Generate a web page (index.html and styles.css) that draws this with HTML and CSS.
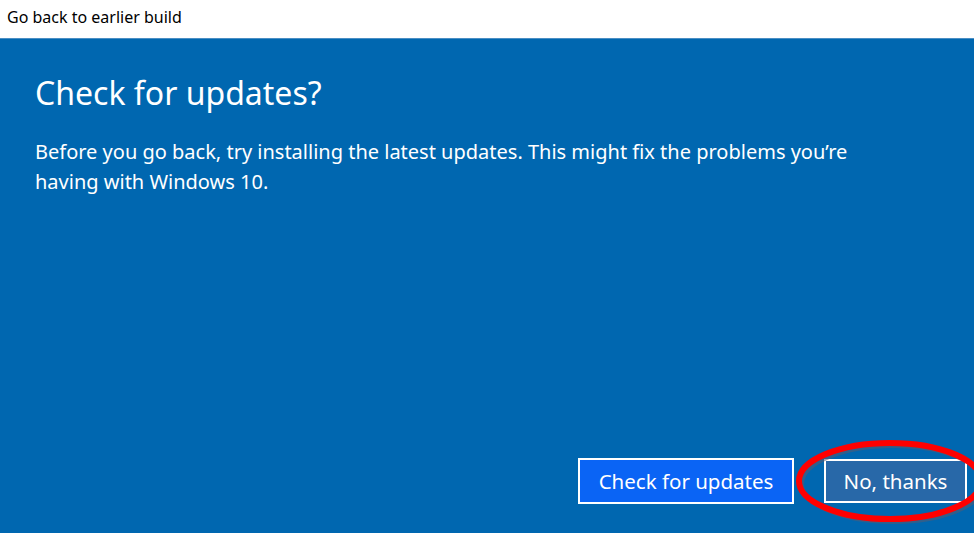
FILE: index.html
```html
<!DOCTYPE html>
<html>
<head>
<meta charset="utf-8">
<link rel="stylesheet" href="styles.css">
</head>
<body>
<div class="titlebar">Go back to earlier build</div>
<div class="panel">
  <h1 class="heading">Check for updates?</h1>
  <p class="body-text">Before you go back, try installing the latest updates. This might fix the problems you’re having with Windows 10.</p>
  <div class="actions">
    <button class="btn btn-primary">Check for updates</button>
    <button class="btn btn-secondary">No, thanks</button>
  </div>
  <svg class="circle" width="200" height="92" viewBox="0 0 200 92">
    <ellipse cx="95" cy="44" rx="91" ry="38" fill="none" stroke="rgba(90,90,110,0.55)" stroke-width="4" transform="translate(3,3)"/>
    <ellipse cx="95" cy="44" rx="91" ry="38" fill="none" stroke="#ff0000" stroke-width="6"/>
  </svg>
</div>
</body>
</html>
```
FILE: styles.css
```css
html, body {
  margin: 0;
  padding: 0;
  width: 974px;
  height: 533px;
  overflow: hidden;
  font-family: "Noto Sans", "Open Sans", sans-serif;
}
.titlebar {
  height: 39px;
  box-sizing: border-box;
  padding: 6px 0 0 7px;
  font-size: 16px;
  color: #000;
  background: #fff;
  border-bottom: 1px solid #4a8ec4;
}
.panel {
  position: relative;
  height: 494px;
  background: #0067b0;
  color: #fff;
  padding: 0 35px;
  display: flex;
  flex-direction: column;
  overflow: hidden;
}
.heading {
  margin: 33px 0 0 0;
  font-weight: 400;
  font-size: 32px;
  line-height: 42px;
}
.body-text {
  margin: 23px 0 0 0;
  font-size: 20px;
  line-height: 30px;
  max-width: 860px;
}
.actions {
  margin-top: auto;
  margin-bottom: 29px;
  margin-right: -28px;
  display: flex;
  justify-content: flex-end;
  gap: 30px;
}
.btn {
  font-family: inherit;
  font-size: 20.5px;
  color: #fff;
  border: 2px solid #fff;
  height: 46px;
  padding: 0;
  box-sizing: border-box;
}
.btn-primary {
  background: #0a64f5;
  width: 216px;
}
.btn-secondary {
  background: #2868a8;
  width: 143px;
  height: 44px;
  margin-top: 1px;
}
.circle {
  position: absolute;
  left: 795px;
  top: 398px;
}
```
